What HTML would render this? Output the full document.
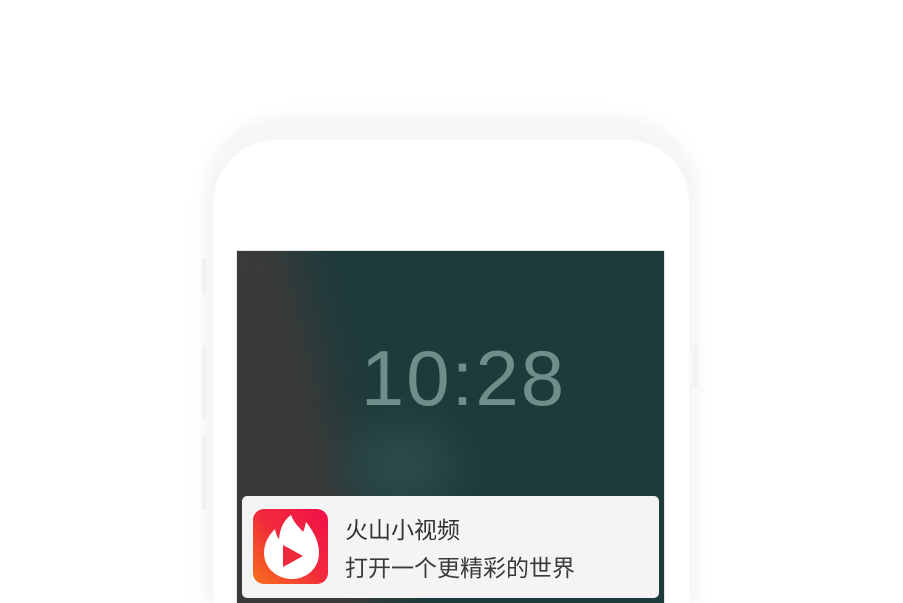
<!DOCTYPE html>
<html><head><meta charset="utf-8"><style>
html,body{margin:0;padding:0;width:903px;height:603px;overflow:hidden;background:#fff;position:relative;font-family:"Liberation Sans","Noto Sans CJK SC",sans-serif}
.outer{position:absolute;left:203px;top:115px;width:497px;height:488px;border-radius:80px 80px 0 0;background:#f6f6f6;filter:blur(6px)}
.inner{position:absolute;left:214px;top:140px;width:475px;height:463px;border-radius:62px 62px 0 0;background:#fff}
.btn{position:absolute;width:5px;background:#f2f2f2;border-radius:2px}
.screen{position:absolute;left:236px;top:250px;width:429px;height:353px;background:#1e3a3a;overflow:hidden;border:1px solid #e6e6e6;border-bottom:none;box-sizing:border-box}
.dark{position:absolute;left:-80px;top:-40px;width:190px;height:500px;background:#3b3a3a;transform:skewX(14deg);filter:blur(24px)}
.glow{position:absolute;left:110px;top:170px;width:110px;height:90px;border-radius:50%;background:#2c4a4a;filter:blur(22px)}
.time{position:absolute;left:0;width:100%;top:88px;text-align:center;font-size:78px;line-height:1;color:#6f8e8a;letter-spacing:2px;padding-left:26px;box-sizing:border-box}
.note{position:absolute;left:242px;top:496px;width:417px;height:102px;background:#f4f4f4;border-radius:5px}
.icon{position:absolute;left:253px;top:509px;width:75px;height:75px;border-radius:11px;overflow:hidden;background:linear-gradient(225deg,#f0104a 0%,#f22a3c 50%,#f8701a 100%)}
.t1{position:absolute;left:345px;top:515px;font-size:23px;line-height:30px;color:#333}
.t2{position:absolute;left:345px;top:553px;font-size:23px;line-height:30px;color:#3a3a3a}
</style></head><body>
<div class="outer"></div>
<div class="inner"></div>
<div class="btn" style="left:202px;top:258px;height:37px"></div>
<div class="btn" style="left:202px;top:345px;height:75px"></div>
<div class="btn" style="left:202px;top:435px;height:75px"></div>
<div class="btn" style="left:693px;top:345px;height:43px"></div>
<div class="screen">
<div class="dark"></div><div class="glow"></div>
<div class="time">10:28</div>
</div>
<div class="note"></div>
<div class="icon">
<svg width="75" height="75" viewBox="0 0 75 75">
<path d="M38 6 C41 14 46 18 50 23 C52 19 52 16 53 13 C61 23 66 33 66 44 C66 59 54 70 39 70 C24 70 11 59 11 44 C11 34 16 26 22 20 C23 25 24 28 26 30 C27 19 31 11 38 6 Z" fill="#fff"/>
<path d="M30 36 L50 47 L30 58 Z" fill="#ee2a3a"/>
</svg>
</div>
<div class="t1">火山小视频</div>
<div class="t2">打开一个更精彩的世界</div>
</body></html>
